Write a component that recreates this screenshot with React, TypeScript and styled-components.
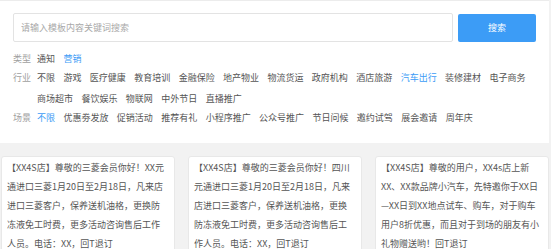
import React from "react";
import styled, {createGlobalStyle} from "styled-components";

const GlobalStyle = createGlobalStyle`
  html, body {
    margin: 0;
    padding: 0;
    background: #f2f2f2;
    font-family: "Noto Sans CJK SC", "Noto Sans", sans-serif;
  }
`;

const S = {
    Page: styled.div`
      width: 549px;
      display: flex;
      flex-direction: column;
      gap: 13px;
    `,
    Panel: styled.section`
      background: #fff;
      border-top: 1px solid #ececec;
      padding: 12px 13px 16px;
      display: flex;
      flex-direction: column;
      gap: 7px;
    `,
    SearchBar: styled.div`
      display: flex;
      align-items: center;
      gap: 5px;
    `,
    SearchInput: styled.input`
      flex: 0 0 440px;
      box-sizing: border-box;
      height: 29px;
      border: 1px solid #e3e3e3;
      border-radius: 2px;
      padding: 0 7px;
      font: inherit;
      font-size: 9px;
      color: #555;
      outline: none;
      &::placeholder {
        color: #a9a9a9;
      }
    `,
    SearchButton: styled.button`
      width: 80px;
      height: 28px;
      border: none;
      border-radius: 2px;
      background: #3c9cf6;
      color: #fff;
      font: inherit;
      font-size: 9px;
      cursor: pointer;
    `,
    Filters: styled.div`
      display: flex;
      flex-direction: column;
    `,
    FilterRow: styled.div`
      display: flex;
      align-items: flex-start;
      gap: 6px;
      font-size: 9px;
      line-height: 19px;
    `,
    Label: styled.span`
      color: #a0a0a0;
      flex: none;
    `,
    Options: styled.div`
      display: flex;
      flex-wrap: wrap;
      column-gap: 8.4px;
      row-gap: 2px;
      max-width: 503px;
    `,
    Option: styled.span<{ $active?: boolean }>`
      color: ${p => (p.$active ? "#3d9cf6" : "#555")};
      cursor: pointer;
      white-space: nowrap;
    `,
    Cards: styled.div`
      display: grid;
      grid-template-columns: repeat(3, 174px);
      column-gap: 13px;
      padding-left: 1px;
    `,
    Card: styled.article`
      background: #fff;
      border: 1px solid #e8e8e8;
      border-radius: 3px;
      padding: 1px 5px 20px;
      font-size: 9px;
      line-height: 19px;
      color: #555;
      min-height: 110px;
    `,
    Line: styled.div`
      white-space: nowrap;
    `,
};

const filters: { label: string; options: string[]; active: string }[] = [
    {label: "类型", options: ["通知", "营销"], active: "营销"},
    {
        label: "行业",
        options: ["不限", "游戏", "医疗健康", "教育培训", "金融保险", "地产物业", "物流货运", "政府机构", "酒店旅游",
            "汽车出行", "装修建材", "电子商务", "商场超市", "餐饮娱乐", "物联网", "中外节日", "直播推广"],
        active: "汽车出行",
    },
    {
        label: "场景",
        options: ["不限", "优惠劵发放", "促销活动", "推荐有礼", "小程序推广", "公众号推广", "节日问候", "邀约试驾",
            "展会邀请", "周年庆"],
        active: "不限",
    },
];

const templates: string[][] = [
    [
        "【XX4S店】尊敬的三菱会员你好！XX元",
        "通进口三菱1月20日至2月18日，凡来店",
        "进口三菱客户，保养送机油格，更换防",
        "冻液免工时费，更多活动咨询售后工作",
        "人员。电话：XX，回T退订",
    ],
    [
        "【XX4S店】尊敬的三菱会员你好！四川",
        "元通进口三菱1月20日至2月18日，凡来",
        "店进口三菱客户，保养送机油格，更换",
        "防冻液免工时费，更多活动咨询售后工",
        "作人员。电话：XX，回T退订",
    ],
    [
        "【XX4S店】尊敬的用户，XX4s店上新",
        "XX、XX款品牌小汽车，先特邀你于XX日",
        "—XX日到XX地点试车、购车，对于购车",
        "用户8折优惠，而且对于到场的朋友有小",
        "礼物赠送哟！回T退订",
    ],
];

const App: React.FC = () => {
    return (
        <>
            <GlobalStyle/>
            <S.Page>
                <S.Panel>
                    <S.SearchBar>
                        <S.SearchInput placeholder="请输入模板内容关键词搜索"/>
                        <S.SearchButton>搜索</S.SearchButton>
                    </S.SearchBar>
                    <S.Filters>
                        {filters.map(f => (
                            <S.FilterRow key={f.label}>
                                <S.Label>{f.label}</S.Label>
                                <S.Options>
                                    {f.options.map(o => (
                                        <S.Option key={o} $active={o === f.active}>{o}</S.Option>
                                    ))}
                                </S.Options>
                            </S.FilterRow>
                        ))}
                    </S.Filters>
                </S.Panel>
                <S.Cards>
                    {templates.map((lines, i) => (
                        <S.Card key={i}>
                            {lines.map(l => <S.Line key={l}>{l}</S.Line>)}
                        </S.Card>
                    ))}
                </S.Cards>
            </S.Page>
        </>
    );
};

export default App;
